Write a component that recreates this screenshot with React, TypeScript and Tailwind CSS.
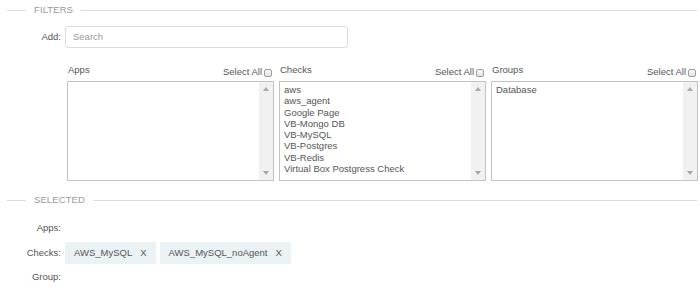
import React from "react";

function Legend({ text }: { text: string }) {
  return (
    <div className="flex items-center h-[20px]">
      <div className="ml-[7px] w-[19px] h-px bg-[#dcdcdc]" />
      <span className="mx-[8px] text-[9.5px] leading-none text-[#9a9a9a] tracking-[0.1px]">{text}</span>
      <div className="flex-1 mr-[3px] h-px bg-[#dcdcdc]" />
    </div>
  );
}

function Checkbox() {
  return <span className="inline-block w-[8px] h-[8px] rounded-[2px] border border-[#9d9d9d] bg-gradient-to-b from-[#f7f7f7] to-[#e4e4e4]" />;
}

function ListBox({ items }: { items: string[] }) {
  return (
    <div className="relative flex h-[100px] border border-[#c3c3c3] bg-white">
      <div className="flex-1 pl-[4px] pt-[2px] text-[9.5px] leading-[11.3px] text-[#555]">
        {items.map((it) => (
          <div key={it} className="whitespace-nowrap">{it}</div>
        ))}
      </div>
      <div className="w-[14px] bg-[#f1f1f1] flex flex-col items-center justify-between py-[5px]">
        <svg width="6" height="4" viewBox="0 0 6 4"><path d="M0 4 L3 0 L6 4 Z" fill="#a6a6a6" /></svg>
        <svg width="6" height="4" viewBox="0 0 6 4"><path d="M0 0 L3 4 L6 0 Z" fill="#a6a6a6" /></svg>
      </div>
    </div>
  );
}

function Column({ title, items }: { title: string; items: string[] }) {
  return (
    <div className="flex flex-col">
      <div className="flex justify-between h-[17px]">
        <span className="text-[9.5px] leading-[12px] text-[#555] pl-[1px]">{title}</span>
        <span className="flex items-center gap-[2px] pt-[2px] h-[15px] text-[9.5px] text-[#555] pr-[2px]">
          Select All <Checkbox />
        </span>
      </div>
      <ListBox items={items} />
    </div>
  );
}

function Chip({ text }: { text: string }) {
  return (
    <span className="flex items-center h-[22px] px-[9px] gap-[8px] bg-[#eaf2f5] text-[9.5px] text-[#555]">
      <span>{text}</span>
      <span>X</span>
    </span>
  );
}

export default function App() {
  return (
    <div className="w-[700px] h-[292px] bg-white overflow-hidden font-['Liberation_Sans',Arial,sans-serif] text-[#555]">
      <Legend text="FILTERS" />
      <div className="flex items-center mt-[6px] h-[22px]">
        <span className="w-[61px] text-right text-[9.5px]">Add:</span>
        <div className="ml-[4px] w-[283px] h-[22px] border border-[#dcdcdc] rounded-[3px] flex items-center pl-[7px]">
          <span className="text-[9.5px] text-[#9a9a9a]">Search</span>
        </div>
      </div>
      <div className="ml-[67px] mr-[2px] mt-[16px] grid grid-cols-3 gap-[5px]">
        <Column title="Apps" items={[]} />
        <Column
          title="Checks"
          items={[
            "aws",
            "aws_agent",
            "Google Page",
            "VB-Mongo DB",
            "VB-MySQL",
            "VB-Postgres",
            "VB-Redis",
            "Virtual Box Postgress Check",
          ]}
        />
        <Column title="Groups" items={["Database"]} />
      </div>
      <div className="mt-[9px]">
        <Legend text="SELECTED" />
      </div>
      <div className="flex items-center mt-[7px] h-[22px]">
        <span className="w-[61px] text-right text-[9.5px]">Apps:</span>
      </div>
      <div className="flex items-center mt-[3px] h-[22px]">
        <span className="w-[61px] text-right text-[9.5px]">Checks:</span>
        <div className="ml-[4px] flex gap-[4px]">
          <Chip text="AWS_MySQL" />
          <Chip text="AWS_MySQL_noAgent" />
        </div>
      </div>
      <div className="flex items-center mt-[2px] h-[22px]">
        <span className="w-[61px] text-right text-[9.5px]">Group:</span>
      </div>
    </div>
  );
}
